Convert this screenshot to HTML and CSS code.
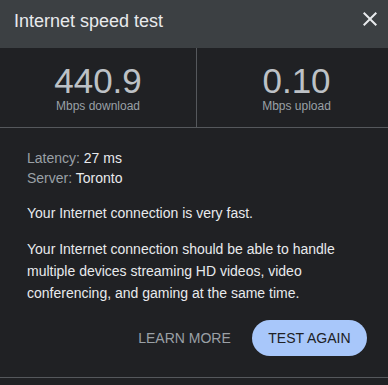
FILE: index.html
```html
<!DOCTYPE html>
<html lang="en">
<head>
<meta charset="utf-8">
<title>Internet speed test</title>
<link rel="stylesheet" href="styles.css">
</head>
<body>
<div class="dialog">
  <header class="header">
    <h1 class="title">Internet speed test</h1>
    <button class="close" aria-label="Close">
      <svg viewBox="0 0 24 24" width="24" height="24"><path d="M19 6.41L17.59 5 12 10.59 6.41 5 5 6.41 10.59 12 5 17.59 6.41 19 12 13.41 17.59 19 19 17.59 13.41 12z" fill="#e8eaed"/></svg>
    </button>
  </header>
  <section class="stats">
    <div class="stat stat-left">
      <div class="value">440.9</div>
      <div class="unit">Mbps download</div>
    </div>
    <div class="stat">
      <div class="value">0.10</div>
      <div class="unit">Mbps upload</div>
    </div>
  </section>
  <section class="content">
    <div class="meta">
      <div><span class="label">Latency:</span> <span class="val">27 ms</span></div>
      <div><span class="label">Server:</span> <span class="val">Toronto</span></div>
    </div>
    <p class="para">Your Internet connection is very fast.</p>
    <p class="para">Your Internet connection should be able to handle multiple devices streaming HD videos, video conferencing, and gaming at the same time.</p>
    <div class="actions">
      <button class="btn btn-text">LEARN MORE</button>
      <button class="btn btn-filled">TEST AGAIN</button>
    </div>
  </section>
</div>
</body>
</html>
```
FILE: styles.css
```css
html, body {
  margin: 0;
  padding: 0;
  background: #202124;
  overflow: hidden;
}
body {
  font-family: "Liberation Sans", Arial, sans-serif;
  color: #e8eaed;
}
.dialog {
  width: 396px;
  background: #202124;
}
.header {
  height: 48px;
  box-sizing: border-box;
  background: #3c4043;
  display: flex;
  align-items: flex-start;
  justify-content: space-between;
  padding: 7px 14px 0 14px;
}
.title {
  margin: 2px 0 0 0;
  font-size: 18px;
  font-weight: normal;
  line-height: 24px;
  color: #e8eaed;
}
.close {
  width: 24px;
  height: 24px;
  padding: 0;
  border: 0;
  background: transparent;
  display: block;
}
.close svg {
  display: block;
}
.stats {
  display: grid;
  grid-template-columns: 197px 1fr;
  border-bottom: 1px solid #55585c;
}
.stat {
  text-align: center;
  padding: 15px 0 13px;
}
.stat-left {
  border-right: 1px solid #55585c;
}
.value {
  font-size: 35px;
  line-height: 35px;
  color: #bdc1c6;
}
.unit {
  font-size: 12px;
  line-height: 16px;
  color: #9aa0a6;
}
.content {
  padding: 20px 29px 21px 27px;
  border-bottom: 1px solid #55585c;
  font-size: 14px;
}
.meta {
  line-height: 20px;
}
.label {
  color: #9aa0a6;
}
.val {
  color: #e8eaed;
}
.para {
  margin: 14px 0 0 0;
  line-height: 22px;
  color: #e8eaed;
}
.actions {
  display: flex;
  justify-content: flex-end;
  gap: 9px;
  margin-top: 16px;
}
.btn {
  font-family: "Liberation Sans", Arial, sans-serif;
  font-size: 14px;
  height: 36px;
  line-height: 36px;
  border: 0;
  border-radius: 18px;
  padding: 0 12px;
  background: transparent;
}
.btn-text {
  color: #9aa0a6;
}
.btn-filled {
  background: #a8c7fa;
  color: #202124;
  padding: 0 16.5px;
}
```
